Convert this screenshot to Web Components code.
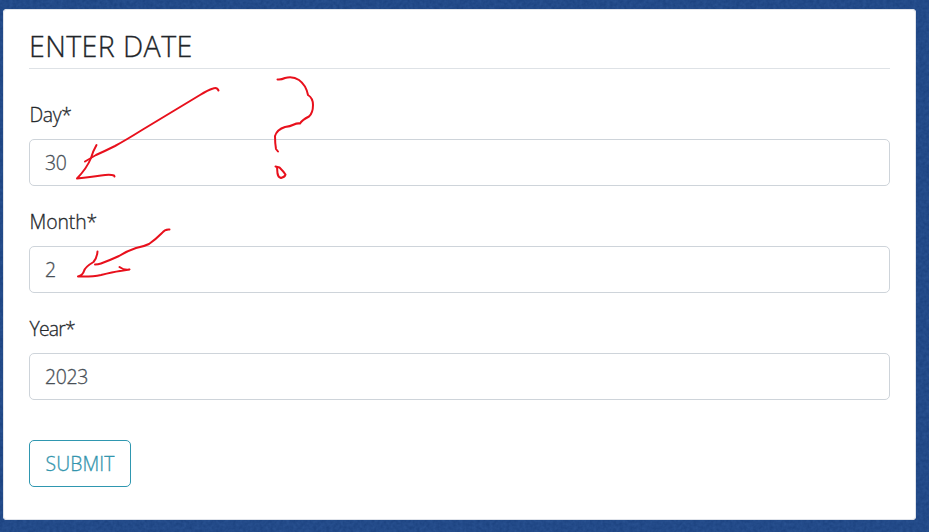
<!DOCTYPE html>
<html lang="en">
<head>
<meta charset="utf-8">
<title>Enter date</title>
<style>
html, body { margin: 0; height: 100%; overflow: hidden; }
body { font-family: "Open Sans", "Noto Sans", sans-serif; font-weight: 300; -webkit-text-stroke: .3px currentColor; color: #212529; }
</style>
</head>
<body>
<date-page>
  <form-card>
    <card-title>ENTER DATE</card-title>
    <form-field label="Day*" style="--ls:-.4px">30</form-field>
    <form-field label="Month*" style="--ls:-.1px">2</form-field>
    <form-field label="Year*" style="--ls:-.8px">2023</form-field>
    <submit-button>SUBMIT</submit-button>
  </form-card>
  <pen-marks slot="overlay"></pen-marks>
</date-page>
<script>
function define(name, html, setup) {
  customElements.define(name, class extends HTMLElement {
    constructor() {
      super();
      this.attachShadow({ mode: 'open' }).innerHTML = html;
    }
    connectedCallback() { if (setup) setup(this); }
  });
}

define('date-page', `
<style>
:host { display: block; position: relative; box-sizing: border-box; width: 929px; height: 532px; padding: 9px 13px 13px 3px; background: #234888; }
.grain { position: absolute; inset: 0; width: 100%; height: 100%; }
main { position: relative; height: 100%; }
</style>
<svg class="grain" aria-hidden="true">
  <filter id="g" x="0" y="0" width="100%" height="100%" color-interpolation-filters="sRGB">
    <feTurbulence type="fractalNoise" baseFrequency=".3" numOctaves="2" seed="4"/>
    <feColorMatrix values=".07 0 0 0 .10  .08 0 0 0 .25  .09 0 0 0 .49  0 0 0 0 1"/>
  </filter>
  <rect width="100%" height="100%" filter="url(#g)"/>
</svg>
<main><slot></slot></main><slot name="overlay"></slot>`);

define('form-card', `
<style>
:host { display: flex; flex-direction: column; box-sizing: border-box; height: 511px; padding: 20px 26px 0; background: #fff; border-radius: 4px; box-shadow: inset 0 0 0 1px #dfe3ea; }
</style><slot></slot>`);

define('card-title', `
<style>
:host { display: block; box-sizing: border-box; height: 40px; border-bottom: 1px solid #dee2e6; font-size: 28.6px; line-height: 33px; letter-spacing: .4px; color: #212529; margin-bottom: 30px; }
</style><slot></slot>`);

define('form-field', `
<style>
:host { display: flex; flex-direction: column; height: 87px; margin-bottom: 20px; }
label { height: 40px; padding-left: .5px; line-height: 32px; font-size: 19.4px; letter-spacing: var(--ls); color: #25292d; }
.box { box-sizing: border-box; height: 47px; padding: 0 15px; border: 1px solid #ced4da; border-radius: 5px; line-height: 46px; font-size: 19.4px; letter-spacing: -.3px; color: #495057; }
</style><label></label><div class="box"><slot></slot></div>`,
  el => { el.shadowRoot.querySelector('label').textContent = el.getAttribute('label'); });

define('submit-button', `
<style>
:host { display: block; margin-top: 20px; }
button { box-sizing: border-box; width: 102px; height: 47px; padding: 0; border: 1px solid #2f97b0; border-radius: 5px; background: none; font: inherit; font-size: 19.4px; line-height: 46px; letter-spacing: .1px; color: #3395ad; -webkit-text-stroke: inherit; -webkit-text-stroke-color: #3395ad; }
</style><button type="button"><slot></slot></button>`);

define('pen-marks', `
<style>
:host { position: absolute; inset: 0; pointer-events: none; }
path { fill: none; stroke: #e8101c; stroke-width: 2; stroke-linecap: round; stroke-linejoin: round; }
</style>
<svg width="929" height="532" aria-hidden="true">
  <path d="M218.500 90.500Q217 87 213 88.500Q208 90 200 95L142 130Q126 140 115 146Q105 151 96 155Q89 159 85 161.500"/>
  <path d="M96.500 145Q93 151 91 158Q87 168 77 178.500Q91 177 101 175.500Q110 174 114 175.500L114.500 176.500"/>
  <path d="M277.500 79.500Q281 80 285 78Q293 76 299 80Q306 85 308 95Q313 98 313 105Q313 113 309 116.500Q302 120 300 123.500Q297 123 294 124.500Q290 126.500 285 127Q277 129.500 275 136Q275 143 276 149L278 151.500"/>
  <path d="M275.500 166.500L279.500 167.500Q283.500 171.500 285.500 174.500Q285 177 281 178Q278 177 277.500 173.500L277 167"/>
  <path d="M169.500 229.500Q165 229 162 233Q155 240 149 244Q144 246.500 136 248Q127 251 119 256Q108 261 101 263.500Q98 264.500 95 264.500"/>
  <path d="M97.500 251.500Q97 258 93.500 262Q85 267 84 271Q83 275 78 276.500Q92 277 101 275Q113 272 120 271L129.500 269.500Q124 270.500 119.500 267"/>
</svg>`);
</script>
</body>
</html>
